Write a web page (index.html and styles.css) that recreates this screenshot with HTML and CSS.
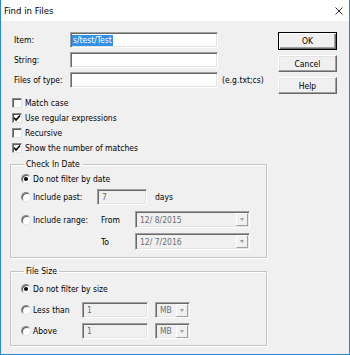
FILE: index.html
```html
<!DOCTYPE html>
<html lang="en">
<head>
  <meta charset="UTF-8" />
  <title>Find in Files</title>
  <link rel="stylesheet" href="styles.css">
</head>
<body>

  <div class="dialog">
    <div class="titlebar">
      <span class="title">Find in Files</span>
      <svg class="close" width="8" height="8" viewBox="0 0 8 8">
        <path d="M0.5 0.5 L7.5 7.5 M7.5 0.5 L0.5 7.5" stroke="#333" stroke-width="1" fill="none"/>
      </svg>
    </div>

    <div class="client">
      <div class="main">

        <div class="fields">
          <label>Item:</label>
          <div class="field"><span class="sel">s/test/Test</span></div>
          <span></span>
          <label>String:</label>
          <div class="field"></div>
          <span></span>
          <label>Files of type:</label>
          <div class="field"></div>
          <span class="hint">(e.g.txt;cs)</span>
        </div>

        <div class="checks">
          <div class="check"><span class="box"></span>Match case</div>
          <div class="check"><span class="box on"><svg width="8" height="8" viewBox="0 0 8 8"><path d="M1 3.8 L3 6 L7 1.5" stroke="#000" stroke-width="1.6" fill="none"/></svg></span>Use regular expressions</div>
          <div class="check"><span class="box"></span>Recursive</div>
          <div class="check"><span class="box on"><svg width="8" height="8" viewBox="0 0 8 8"><path d="M1 3.8 L3 6 L7 1.5" stroke="#000" stroke-width="1.6" fill="none"/></svg></span>Show the number of matches</div>
        </div>

        <!-- Check In Date -->
        <fieldset class="group date">
          <legend>Check In Date</legend>
          <div class="row r1">
            <span class="radio on"></span>Do not filter by date
          </div>
          <div class="row r2">
            <span class="opt"><span class="radio"></span>Include past:</span>
            <div class="field off past">7</div>
            <span class="days">days</span>
          </div>
          <div class="row r3">
            <span class="opt"><span class="radio"></span>Include range:</span>
            <span class="sub">From</span>
            <div class="field off combo wide"><span class="val">12/ 8/2015</span><span class="drop"></span></div>
          </div>
          <div class="row r4">
            <span class="opt"></span>
            <span class="sub">To</span>
            <div class="field off combo wide"><span class="val">12/ 7/2016</span><span class="drop"></span></div>
          </div>
        </fieldset>

        <!-- File Size -->
        <fieldset class="group size">
          <legend>File Size</legend>
          <div class="row s1">
            <span class="radio on"></span>Do not filter by size
          </div>
          <div class="row s2">
            <span class="opt"><span class="radio"></span>Less than</span>
            <div class="field off num">1</div>
            <div class="field off combo unit"><span class="val">MB</span><span class="drop"></span></div>
          </div>
          <div class="row s2">
            <span class="opt"><span class="radio"></span>Above</span>
            <div class="field off num">1</div>
            <div class="field off combo unit"><span class="val">MB</span><span class="drop"></span></div>
          </div>
        </fieldset>

      </div>

      <div class="buttons">
        <button class="btn default">OK</button>
        <button class="btn">Cancel</button>
        <button class="btn">Help</button>
      </div>
    </div>
  </div>

</body>
</html>
```

FILE: styles.css
```css
/* Reset */
* {
  margin: 0; padding: 0; box-sizing: border-box;
}
html, body {
  width: 350px;
  height: 355px;
  overflow: hidden;
  background: #f0f0f0;
}
body {
  font-family: "DejaVu Sans Condensed", "Liberation Sans", sans-serif;
  font-size: 8.5px;
  color: #000;
}

/* Ventana */
.dialog {
  width: 350px;
  height: 355px;
  border: 1px solid #2b88d8;
  border-top: 0;
  background: #f0f0f0;
  display: flex;
  flex-direction: column;
}
.titlebar {
  height: 21px;
  background: #fff;
  display: flex;
  align-items: center;
  justify-content: space-between;
  padding: 0 6px 0 3px;
}
.title {
  font-size: 9.5px;
}

.client {
  display: flex;
  padding: 11px 0 0 9px;
}
.main {
  width: 257px;
}

/* Campos de texto */
.fields {
  display: grid;
  grid-template-columns: 56px 148px auto;
  grid-auto-rows: 16px;
  row-gap: 4px;
  padding-left: 4px;
  align-items: center;
}
.hint {
  margin-left: 4px;
}
.field {
  height: 16px;
  background: #fff;
  border: 1px solid;
  border-color: #a0a0a0 #fff #fff #a0a0a0;
  box-shadow: inset 1px 1px 0 #696969, inset -1px -1px 0 #e3e3e3;
  display: flex;
  align-items: center;
  padding-left: 1px;
}
.field .sel {
  background: #3390e8;
  color: #fff;
  line-height: 11px;
  padding: 0 1px;
}
.field.off {
  background: #f0f0f0;
  color: #6d6d6d;
  padding-left: 4px;
}

/* Casillas */
.checks {
  margin-top: 7px;
  padding-left: 2px;
}
.check {
  height: 15px;
  display: flex;
  align-items: center;
}
.box {
  width: 10px;
  height: 10px;
  margin-right: 3px;
  background: #fff;
  border: 1px solid;
  border-color: #8a8a8a #e3e3e3 #e3e3e3 #8a8a8a;
  box-shadow: inset 1px 1px 0 #5a5a5a;
  display: flex;
  align-items: center;
  justify-content: center;
}
.box svg {
  display: block;
}

/* Grupos */
.group {
  border: 1px solid #c4c4c4;
  box-shadow: inset 1px 1px 0 #fff, 1px 1px 0 #fff;
  padding: 0 0 7px 10px;
}
.group legend {
  margin-left: 3px;
  padding: 0 2px;
  line-height: 12px;
}
.group.date {
  margin-top: 3px;
  padding-top: 1px;
}
.group.size {
  margin-top: 7px;
  padding-top: 4px;
  padding-bottom: 6px;
}

.row {
  display: flex;
  align-items: center;
  height: 16px;
}
.r2 { margin-top: 2px; }
.r3 { margin-top: 6px; height: 17px; }
.r4 { margin-top: 5px; height: 17px; }
.s2 { margin-top: 5px; }

.radio {
  width: 10px;
  height: 10px;
  margin-right: 2px;
  border-radius: 50%;
  background: #fff;
  border: 1px solid;
  border-color: #8a8a8a #e3e3e3 #e3e3e3 #8a8a8a;
  box-shadow: inset 1px 1px 0 #5a5a5a;
  display: flex;
  align-items: center;
  justify-content: center;
}
.radio.on::after {
  content: "";
  width: 4px;
  height: 4px;
  border-radius: 50%;
  background: #000;
}
.opt {
  display: flex;
  align-items: center;
}
.date .opt { width: 76px; }
.size .opt { width: 61px; }

.past { width: 50px; }
.days { margin-left: 8px; }
.sub {
  width: 38px;
  padding-left: 4px;
}
.num { width: 66px; }

/* Combos desactivados */
.combo {
  height: 17px;
  justify-content: space-between;
  padding-left: 2px;
  padding-right: 1px;
}
.field.num + .combo { margin-left: 7px; height: 16px; }
.combo.wide { width: 115px; }
.combo.unit { width: 35px; }
.combo .val {
  white-space: pre;
}
.drop {
  width: 12px;
  height: 13px;
  background: #f0f0f0;
  border: 1px solid;
  border-color: #fff #a0a0a0 #a0a0a0 #fff;
  display: flex;
  align-items: center;
  justify-content: center;
}
.drop::after {
  content: "";
  border-left: 2.5px solid transparent;
  border-right: 2.5px solid transparent;
  border-top: 3px solid #a0a0a0;
}

/* Botones */
.buttons {
  margin-left: 11px;
  display: flex;
  flex-direction: column;
  gap: 5px;
}
.btn {
  width: 59px;
  height: 17px;
  font: inherit;
  color: #000;
  background: #f0f0f0;
  border: 1px solid;
  border-color: #fff #696969 #696969 #fff;
  box-shadow: inset -1px -1px 0 #a0a0a0, inset 1px 1px 0 #e3e3e3;
}
.btn.default {
  height: 18px;
  border: 1px solid #000;
  box-shadow: inset 1px 1px 0 #fff, inset -1px -1px 0 #696969, inset -2px -2px 0 #a0a0a0;
}
```
